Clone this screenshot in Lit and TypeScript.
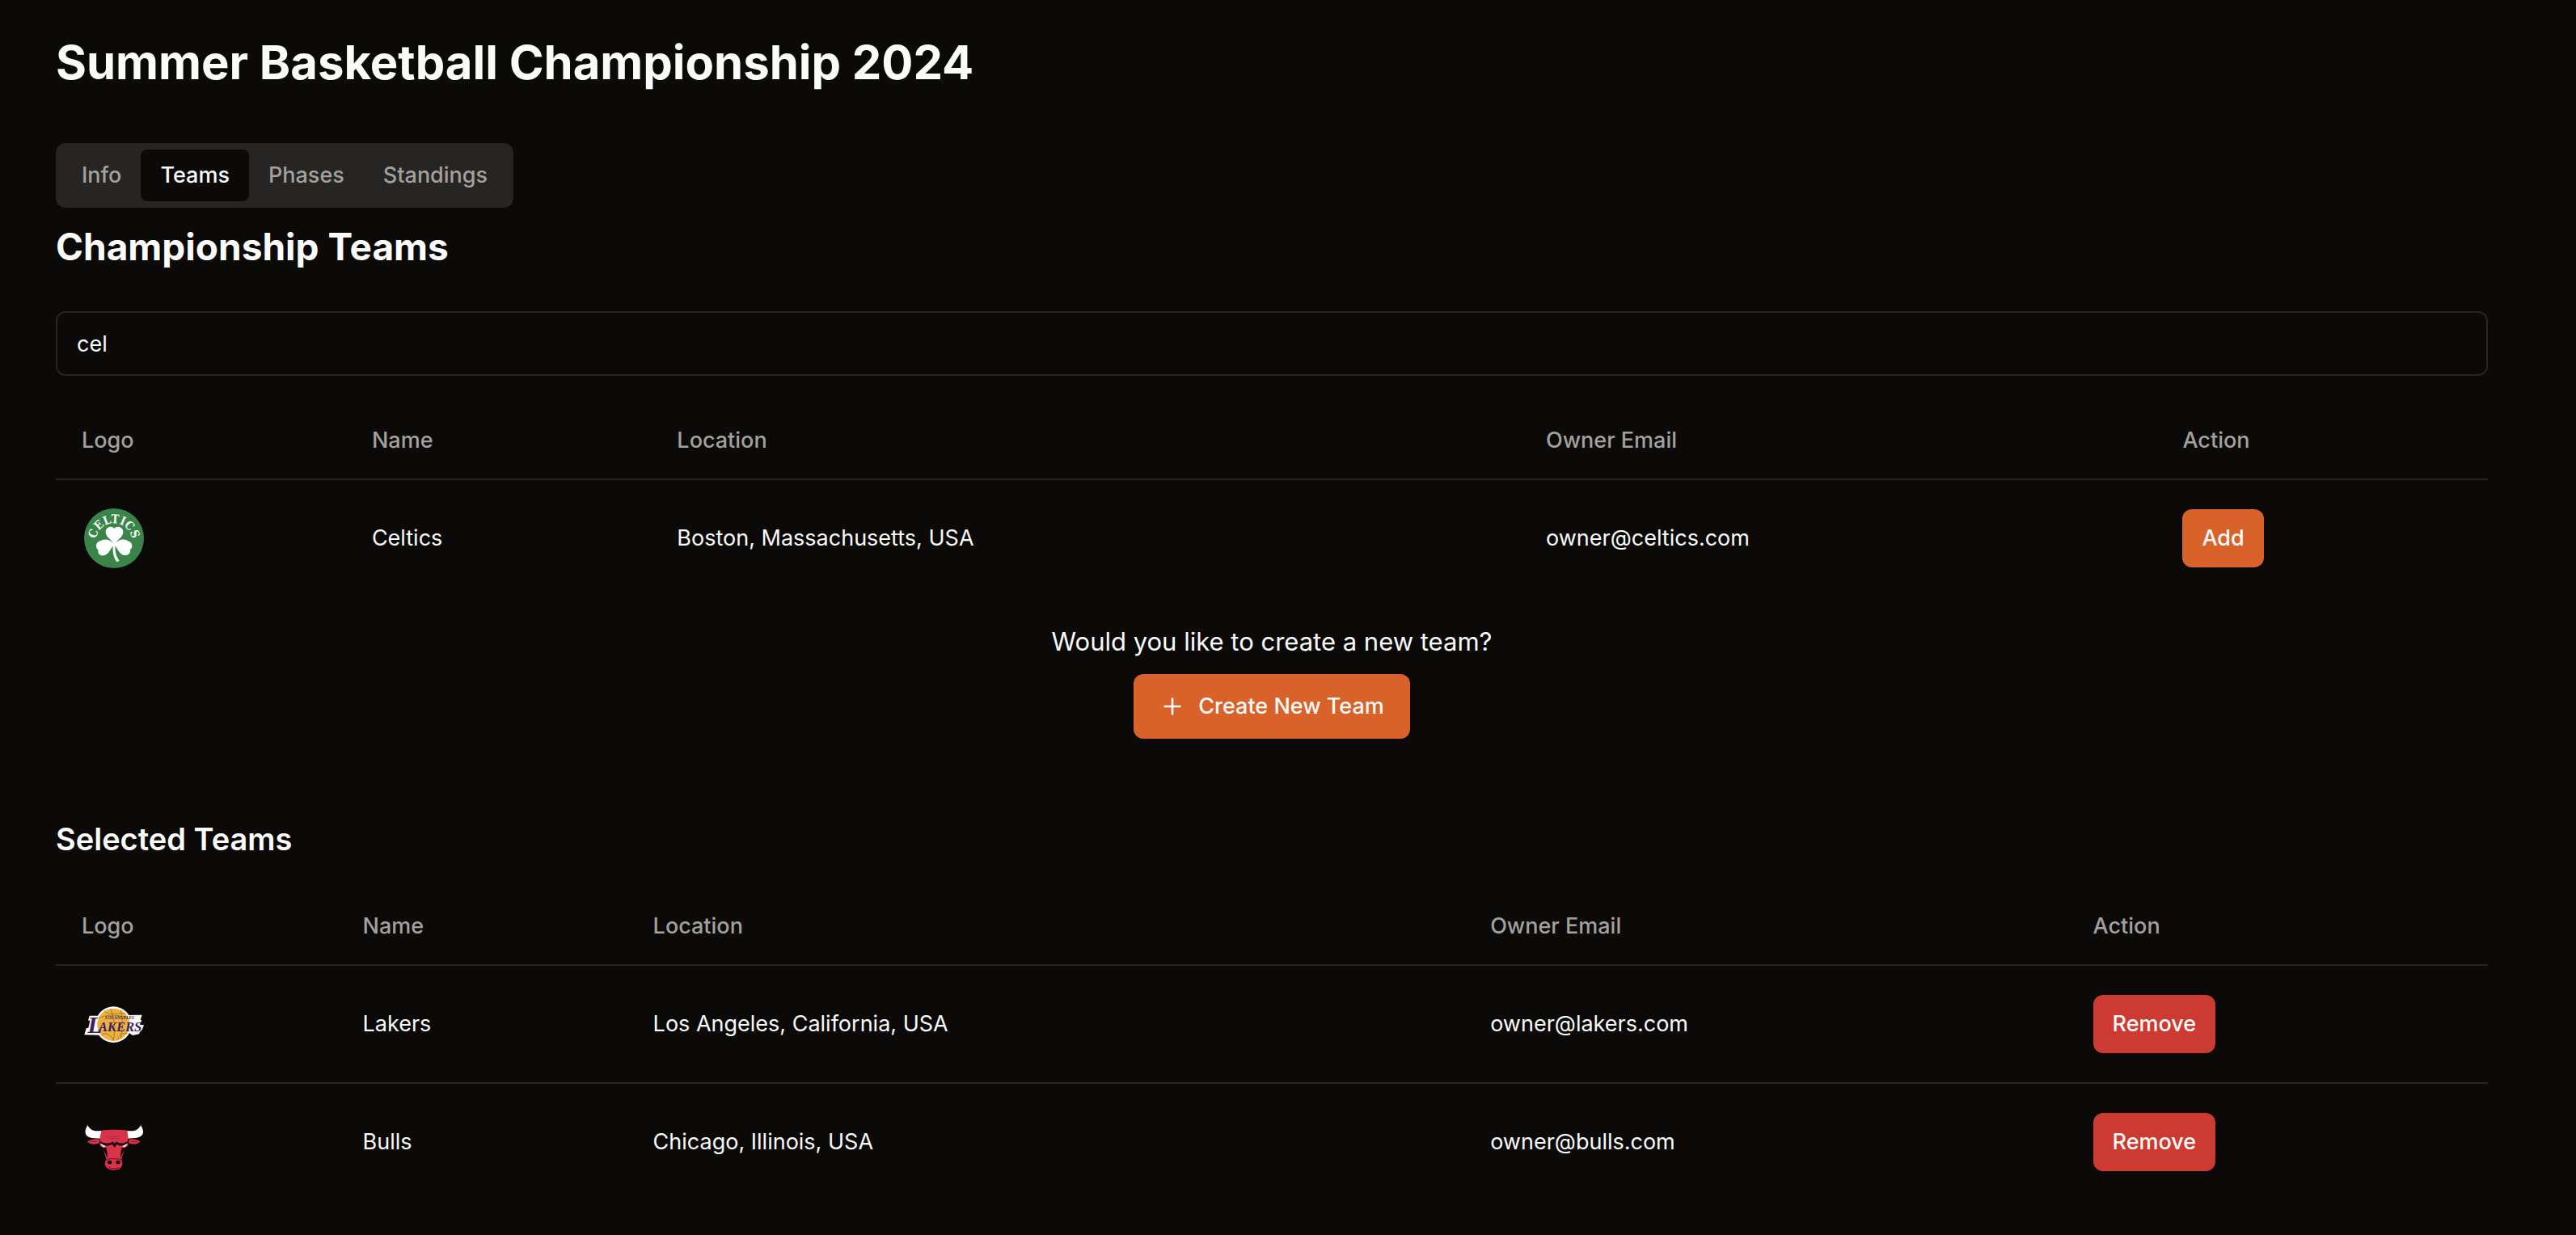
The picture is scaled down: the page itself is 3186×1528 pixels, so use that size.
import { LitElement, html, css, svg } from "lit";
import { customElement, property, state } from "lit/decorators.js";

interface Team {
  name: string;
  location: string;
  email: string;
}

const celticsLogo = svg`
  <svg class="logo" viewBox="33 33 240 240" role="img" aria-label="Celtics logo">
    <circle cx="153" cy="153" r="111" fill="#3a8449" />
    <path id="arc" d="M86 164 A67 67 0 1 1 220 164" fill="none" />
    <text class="arc-text" font-size="44" fill="#f4faf2" text-anchor="middle">
      <textPath href="#arc" startOffset="50%">CELTICS</textPath>
    </text>
    <g fill="#fdfffc">
      <path d="M153 178 C150 160 122 152 122 129 C122 110 146 104 154 117 C162 104 187 110 187 129 C187 152 159 160 156 178 Z" />
      <path d="M154 176 C140 154 112 154 103 163 C97 164 86 170 87 183 C88 192 93 195 95 196 C91 208 100 219 114 217 C134 214 140 190 154 176 Z" />
      <path d="M154 176 C168 154 196 154 204 163 C212 164 221 172 220 184 C219 191 215 194 213 195 C216 208 206 217 192 216 C172 213 166 190 154 176 Z" />
      <path d="M150 172 L158 172 C156 200 160 220 173 236 L163 241 C149 222 147 198 150 172 Z" />
    </g>
  </svg>`;

const lakersLogo = svg`
  <svg class="logo" viewBox="33 18 240 240" role="img" aria-label="Lakers logo">
    <circle cx="151" cy="140" r="67" fill="#fbf8f6" />
    <path d="M62 107 L108 107 L104 119 L118 106 L257 104 L251 122 L256 124 L249 140 L264 142 L257 160 L250 166 L246 175 L222 180 L205 168 L104 168 L98 179 L43 178 L50 154 L58 152 L64 126 L57 124 Z" fill="#fbf8f6" />
    <circle cx="151" cy="140" r="60" fill="#edb23e" />
    <g fill="none" stroke="#8d6023" stroke-width="2">
      <path d="M118 90 C136 112 172 92 196 100" />
      <path d="M139 81 C151 100 163 160 149 200" />
      <path d="M97 116 C122 100 190 104 207 118" />
      <path d="M106 178 C120 168 142 176 153 199" />
      <path d="M202 172 C182 170 168 182 166 198" />
      <path d="M178 87 C184 104 186 150 178 192" />
    </g>
    <g class="lakers-text" fill="#3a1f66">
      <text x="120" y="119" font-size="16">LOS ANGELES</text>
      <text y="165"><tspan x="55" dy="6" font-size="90">L</tspan><tspan x="95" dy="-6" font-size="50">AKERS</tspan></text>
    </g>
  </svg>`;

const bullsLogo = svg`
  <svg class="logo" viewBox="33 6 240 240" role="img" aria-label="Bulls logo">
    <path d="M55 64 C42 84 42 106 70 111 L104 113 L107 84 C84 86 70 88 55 64 Z" fill="#fff" />
    <path d="M252 64 C266 84 266 106 238 110 L203 113 L201 84 C224 86 238 88 252 64 Z" fill="#fff" />
    <path d="M53 65 C54 58 56 56 57 66 Z M250 66 C252 57 255 58 254 65 Z" fill="#c62d43" />
    <path d="M107 83 C130 79 178 79 202 83 L206 112 L204 122 L206 138 L194 150 L181 188 L184 206 C184 216 176 226 166 228 C156 231 146 231 138 228 C126 224 118 214 119 204 L124 188 L112 150 L100 138 L102 122 L100 112 Z" fill="#d8334a" />
    <path d="M100 116 C84 112 66 116 54 124 C62 134 80 138 98 130 Z" fill="#d8334a" />
    <path d="M208 116 C224 112 240 116 250 124 C242 134 226 138 208 130 Z" fill="#d8334a" />
    <path d="M62 124 L90 124 M216 124 L242 124" stroke="#8e1f30" stroke-width="3" />
    <path d="M128 106 L177 105 M136 114 C148 111 160 111 172 114" fill="none" stroke="#9c2436" stroke-width="2" />
    <path d="M100 122 C116 132 136 134 149 124 L155 132 L161 124 C174 134 192 132 206 122 L202 132 C190 142 176 142 164 134 L155 146 L146 134 C134 142 116 142 104 132 Z" fill="#1b080b" />
    <path d="M103 131 L122 141 L118 145 C110 144 105 138 103 131 Z M203 131 L184 141 L188 145 C196 144 201 138 203 131 Z" fill="#f6e9ea" />
    <path d="M102 140 C108 147 117 149 124 146 L128 166 L129 186 C122 170 114 152 102 140 Z M204 140 C198 147 189 149 182 146 L178 166 L177 186 C184 170 192 152 204 140 Z" fill="#1b080b" />
    <path d="M122 194 C132 186 172 186 182 194 M133 220 C146 226 160 226 172 220" fill="none" stroke="#5d111e" stroke-width="3" />
    <ellipse cx="137" cy="201" rx="8" ry="7" fill="#1b080b" />
    <ellipse cx="168" cy="201" rx="8" ry="7" fill="#1b080b" />
  </svg>`;

const logos: Record<string, unknown> = {
  Celtics: celticsLogo,
  Lakers: lakersLogo,
  Bulls: bullsLogo,
};

@customElement("team-table")
class TeamTable extends LitElement {
  @property({ attribute: false }) teams: Team[] = [];
  @property() action = "Add";

  static styles = css`
    :host {
      display: block;
    }
    table {
      width: 100%;
      border-collapse: collapse;
      font-size: 27px;
      line-height: 40px;
    }
    tr {
      border-bottom: 2px solid #262523;
    }
    tbody tr:last-child {
      border-bottom: 0;
    }
    th {
      height: 96px;
      box-sizing: border-box;
      padding: 0 32px;
      text-align: left;
      font-weight: 500;
      color: #a3a19d;
    }
    td {
      padding: 32px;
    }
    .logo {
      display: block;
      width: 80px;
      height: 80px;
    }
    .arc-text {
      font-family: "DejaVu Serif Condensed", "DejaVu Serif", serif;
      font-weight: 700;
    }
    .lakers-text {
      font-family: "Liberation Serif", serif;
      font-style: italic;
      font-weight: 700;
    }
    button {
      height: 72px;
      padding: 0 24px;
      border: 0;
      border-radius: 12px;
      font: inherit;
      font-weight: 500;
      color: #fafaf9;
      background: #d8622a;
    }
    .remove {
      background: #cc3a31;
    }
  `;

  render() {
    return html`
      <table>
        <thead>
          <tr>
            <th scope="col">Logo</th>
            <th scope="col">Name</th>
            <th scope="col">Location</th>
            <th scope="col">Owner Email</th>
            <th scope="col">Action</th>
          </tr>
        </thead>
        <tbody>
          ${this.teams.map(
            (team) => html`
              <tr>
                <td>${logos[team.name]}</td>
                <td>${team.name}</td>
                <td>${team.location}</td>
                <td>${team.email}</td>
                <td>
                  <button type="button" class=${this.action.toLowerCase()}>${this.action}</button>
                </td>
              </tr>
            `
          )}
        </tbody>
      </table>
    `;
  }
}

@customElement("app-root")
class AppRoot extends LitElement {
  @state() private tab = "Teams";
  @state() private query = "cel";

  private found: Team[] = [
    { name: "Celtics", location: "Boston, Massachusetts, USA", email: "owner@celtics.com" },
  ];

  private selected: Team[] = [
    { name: "Lakers", location: "Los Angeles, California, USA", email: "owner@lakers.com" },
    { name: "Bulls", location: "Chicago, Illinois, USA", email: "owner@bulls.com" },
  ];

  static styles = css`
    :host {
      display: block;
      box-sizing: border-box;
      min-height: 100vh;
      padding: 41px 109px 40px 69px;
      background: #0b0a09;
      color: #fafaf9;
      font-family: Inter, "Liberation Sans", sans-serif;
      font-size: 31px;
      line-height: 48px;
    }
    h1,
    h2,
    h3,
    p {
      margin: 0;
    }
    h1 {
      margin-bottom: 64px;
      font-size: 58px;
      line-height: 72px;
      font-weight: 700;
    }
    .tabs {
      display: flex;
      width: fit-content;
      align-items: center;
      height: 80px;
      box-sizing: border-box;
      padding: 8px;
      border-radius: 12px;
      background: #262523;
    }
    .tab {
      padding: 12px 24px;
      border: 0;
      border-radius: 8px;
      font: inherit;
      font-size: 27px;
      line-height: 40px;
      font-weight: 500;
      color: #a3a19d;
      background: transparent;
    }
    .tab[aria-selected="true"] {
      color: #fafaf9;
      background: #0b0a09;
    }
    .panel {
      display: flex;
      flex-direction: column;
      margin-top: 16px;
    }
    h2 {
      margin-bottom: 48px;
      font-size: 46px;
      line-height: 64px;
      font-weight: 700;
    }
    .search {
      height: 80px;
      box-sizing: border-box;
      width: 100%;
      margin-bottom: 32px;
      padding: 0 24px;
      border: 2px solid #262523;
      border-radius: 12px;
      outline: 0;
      font: inherit;
      font-size: 27px;
      color: inherit;
      background: transparent;
    }
    .prompt {
      display: flex;
      flex-direction: column;
      align-items: center;
      gap: 16px;
      margin: 32px 0 96px;
    }
    .create {
      display: flex;
      align-items: center;
      gap: 16px;
      height: 80px;
      padding: 0 32px;
      border: 0;
      border-radius: 12px;
      font: inherit;
      font-size: 27px;
      font-weight: 500;
      color: #fafaf9;
      background: #d8622a;
    }
    .plus {
      width: 32px;
      height: 32px;
      fill: none;
      stroke: currentColor;
      stroke-width: 2;
      stroke-linecap: round;
    }
    h3 {
      margin-bottom: 32px;
      font-size: 38px;
      line-height: 56px;
      font-weight: 600;
    }
  `;

  render() {
    return html`
      <h1>Summer Basketball Championship 2024</h1>
      <div class="tabs" role="tablist">
        ${["Info", "Teams", "Phases", "Standings"].map(
          (name) => html`
            <button
              type="button"
              class="tab"
              role="tab"
              aria-selected=${this.tab === name}
              @click=${() => (this.tab = name)}
            >${name}</button>
          `
        )}
      </div>
      <section class="panel">
        <h2>Championship Teams</h2>
        <input
          class="search"
          type="text"
          aria-label="Search teams"
          .value=${this.query}
          @input=${(e: Event) => (this.query = (e.target as HTMLInputElement).value)}
        />
        <team-table .teams=${this.found} action="Add"></team-table>
        <div class="prompt">
          <p>Would you like to create a new team?</p>
          <button type="button" class="create">
            <svg class="plus" viewBox="0 0 24 24" aria-hidden="true">
              <path d="M5 12h14M12 5v14" />
            </svg>
            Create New Team
          </button>
        </div>
        <h3>Selected Teams</h3>
        <team-table .teams=${this.selected} action="Remove"></team-table>
      </section>
    `;
  }
}
